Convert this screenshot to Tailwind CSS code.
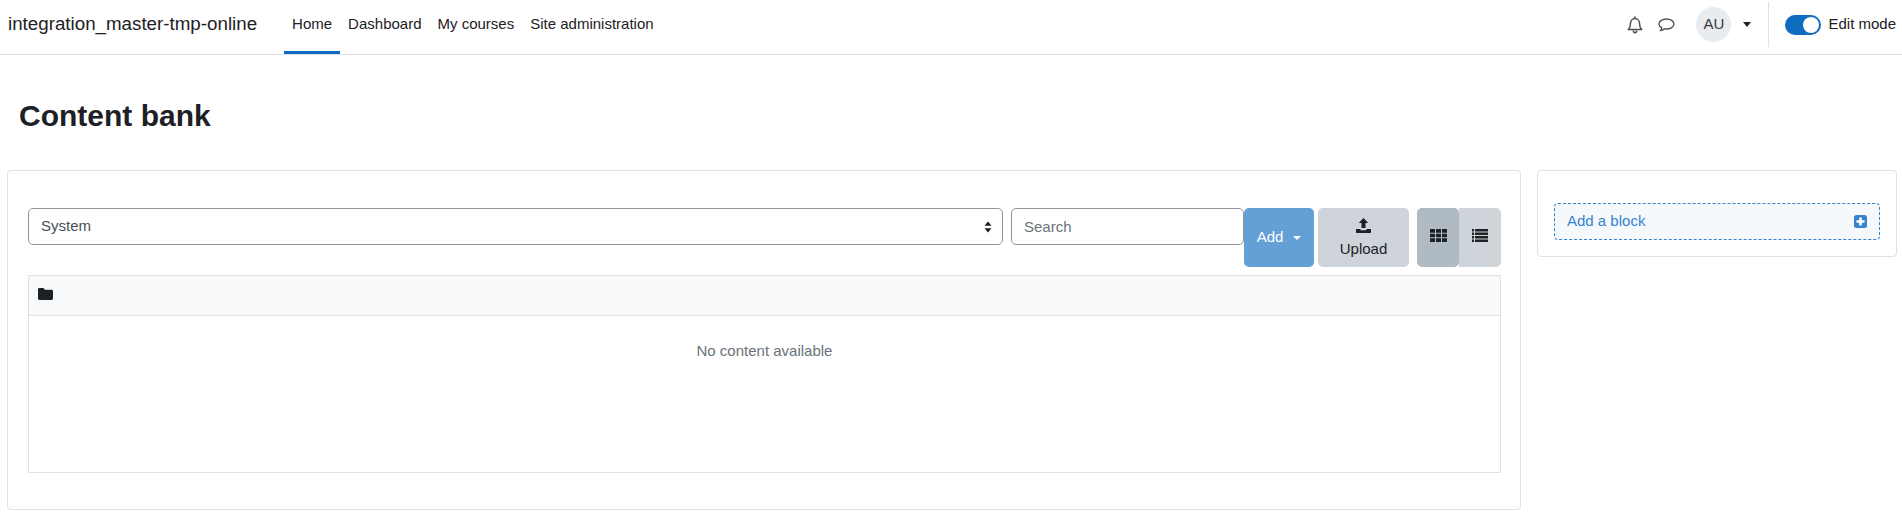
<!DOCTYPE html>
<html>
<head>
    <title>Content bank</title>
    <script src="https://cdn.jsdelivr.net/npm/@tailwindcss/browser@4"></script>
</head>
<body class="bg-white text-[#1d2125] text-[15px] font-['Liberation_Sans',Arial,sans-serif]">
    <!-- top nav -->
    <nav class="flex items-stretch h-[55px] border-b border-[#dee2e6] bg-white pl-2 pr-[6px]">
        <a class="self-center text-[18.75px] mr-[27px] mb-[5px] leading-none">integration_master-tmp-online</a>
        <a class="flex items-center px-2 border-b-[3px] border-[#0f6cbf] pb-[2px]">Home</a>
        <a class="flex items-center px-2 pb-[5px]">Dashboard</a>
        <a class="flex items-center px-2 pb-[5px]">My courses</a>
        <a class="flex items-center px-2 pb-[5px]">Site administration</a>

        <div class="ml-auto flex items-center pb-[5px]">
            <svg class="w-[16px] h-[18px] text-[#495057]" viewBox="0 0 16 18" fill="none" stroke="currentColor" stroke-width="1.5">
                <path d="M1.2 13.6c1.6-1.5 2.3-3 2.3-6.2C3.500 4.500 5.500 2.600 8 2.600s4.500 1.900 4.500 4.800c0 3.200.7 4.700 2.300 6.200z" stroke-linejoin="round"/>
                <path d="M8 .6v2M6.300 14.500c0 1.300.8 2.200 1.700 2.200s1.700-.9 1.700-2.200"/>
            </svg>
            <svg class="ml-[15px] w-[17px] h-[16px] text-[#495057]" viewBox="0 0 17 16" fill="none" stroke="currentColor" stroke-width="1.3">
                <path d="M8.500 2C4.600 2 1 4.100 1 7c0 1.700 1.200 3 2.800 3.800-.1 1-.6 2-1.500 2.900 1.500-.1 3-.8 4-1.900.7.100 1.400.2 2.200.2 3.900 0 7.500-2.100 7.500-5S12.400 2 8.500 2z" stroke-linejoin="round"/>
            </svg>
            <div class="ml-[21px] w-[35px] h-[35px] rounded-full bg-[#e9ecef] flex items-center justify-center text-[15px] text-[#343a40]">AU</div>
            <span class="ml-[12px] w-0 h-0 border-x-[4.5px] border-x-transparent border-t-[5px] border-t-[#1d2125]"></span>
            <div class="ml-[17px] w-px h-[45px] bg-[#dee2e6]"></div>
            <span class="ml-[16px] relative w-[36px] h-[20px] rounded-full bg-[#0f6cbf]">
                <span class="absolute right-[2px] top-[2px] w-[16px] h-[16px] rounded-full bg-white"></span>
            </span>
            <span class="ml-[7px]">Edit mode</span>
        </div>
    </nav>

    <h2 class="pl-[19px] pt-[43px] text-[30px] font-bold leading-[36px] text-[#1d2125]">Content bank</h2>

    <div class="flex gap-[16px] pl-[7px] pr-[5px] mt-[36px]">
        <!-- main card -->
        <main class="w-[1514px] h-[340px] border border-[#dee2e6] rounded bg-white pl-[20px] pr-[19px] pt-[37px]">
            <div class="flex items-start">
                <div class="shrink-0 flex items-center justify-between w-[975px] h-[37px] border border-[#8f959e] rounded-[5px] pl-3 pr-[10px] text-[#495057]">
                    <span>System</span>
                    <svg class="w-[8px] h-[12px] text-[#1d2125]" viewBox="0 0 8 12" fill="currentColor"><path d="M4 .5 7.500 4.700H.5zM4 11.500.5 7.300h7z"/></svg>
                </div>
                <div class="shrink-0 ml-[8px] flex items-center w-[233px] h-[37px] border border-[#8f959e] rounded-[5px] px-3 pt-[1px] text-[#6a737b]">Search</div>
                <button class="shrink-0 flex items-center justify-center w-[70px] h-[59px] bg-[#649fd6] text-white rounded-[5px]">
                    Add<span class="ml-[10px] w-0 h-0 border-x-[4.500px] border-x-transparent border-t-[4.500px] border-t-white"></span>
                </button>
                <button class="shrink-0 ml-[4px] flex flex-col items-center pt-[10px] w-[91px] h-[59px] bg-[#ced4da] rounded-[5px]">
                    <svg class="w-[15px] h-[15px] mb-[5px]" viewBox="0 0 15 15" fill="#1d2125">
                        <path d="M7.500 0 12.300 5H9.500v5h-4V5H2.700z"/>
                        <path d="M0 11h4.500v1.200h6V11H15v3.200a.8.800 0 0 1-.8.800H.8a.8.800 0 0 1-.8-.8z"/>
                    </svg>
                    <span>Upload</span>
                </button>
                <div class="shrink-0 ml-[8px] flex">
                    <button class="flex items-center justify-center w-[42px] h-[59px] pb-[4px] bg-[#b0bac3] rounded-[5px]">
                        <svg class="w-[17px] h-[13px]" viewBox="0 0 17 13" fill="#1d2125">
                            <path d="M0 0h5v3.700H0zM6 0h5v3.700H6zM12 0h5v3.700h-5zM0 4.650h5v3.700H0zM6 4.650h5v3.700H6zM12 4.650h5v3.700h-5zM0 9.300h5V13H0zM6 9.300h5V13H6zM12 9.300h5V13h-5z"/>
                        </svg>
                    </button>
                    <button class="flex items-center justify-center w-[42px] h-[59px] pb-[4px] bg-[#ced4da] rounded-r-[5px]">
                        <svg class="w-[16px] h-[13px]" viewBox="0 0 16 13" fill="#1d2125">
                            <path d="M0 0h2v2.500H0zM3 0h13v2.500H3zM0 3.500h2V6H0zM3 3.500h13V6H3zM0 7h2v2.500H0zM3 7h13v2.500H3zM0 10.500h2V13H0zM3 10.500h13V13H3z"/>
                        </svg>
                    </button>
                </div>
            </div>

            <div class="mt-[8px] h-[198px] border border-[#dee2e6]">
                <div class="flex items-center h-[40px] pl-[9px] pb-[4px] bg-[#f8f9fa] border-b border-[#dee2e6]">
                    <svg class="w-[15px] h-[12px]" viewBox="0 0 16 13" preserveAspectRatio="none" fill="#1d2125">
                        <path d="M1.500 0h4.300l1.700 2h7A1.500 1.500 0 0 1 16 3.500v8a1.500 1.500 0 0 1-1.500 1.500h-13A1.500 1.500 0 0 1 0 11.500v-10A1.500 1.500 0 0 1 1.500 0z"/>
                    </svg>
                </div>
                <div class="text-center text-[#6a737b] pt-[24px] leading-[22px]">No content available</div>
            </div>
        </main>

        <!-- block column -->
        <aside class="w-[360px] h-[87px] border border-[#dee2e6] rounded bg-white px-[16px] pt-[32px]">
            <a class="flex items-center justify-between h-[37px] border border-dashed border-[#3584d0] rounded bg-[#f5f9fc] pl-[12px] pr-[12px] text-[#3584d0]">
                Add a block
                <svg class="w-[13px] h-[13px]" viewBox="0 0 13 13"><rect width="13" height="13" rx="2.500" fill="#3584d0"/><path d="M5.200 2.500h2.600v2.700h2.700v2.600H7.800v2.700H5.200V7.800H2.500V5.200h2.700z" fill="#fff"/></svg>
            </a>
        </aside>
    </div>
</body>
</html>
